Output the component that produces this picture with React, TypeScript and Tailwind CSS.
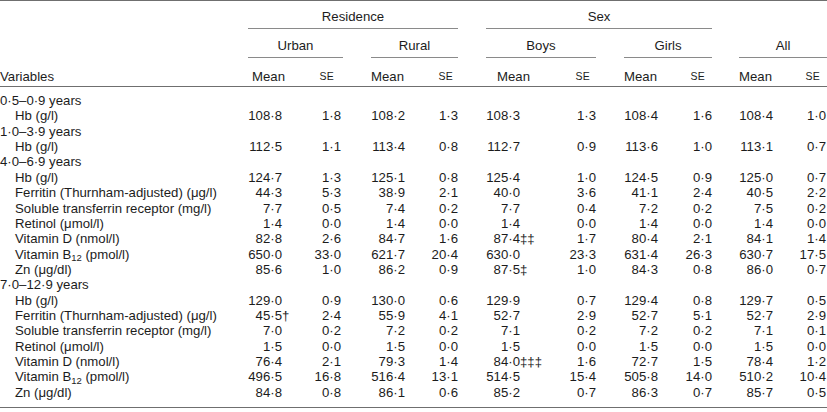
import clsx from "clsx";

type Cell = [string, string, string?];
type Row = { label: string; sub?: boolean; vals?: Cell[] };

const cols =
  "grid grid-cols-[248px_42px_53px_28px_39px_48px_28px_54px_56px_28px_41px_47px_27px_41px_47px]";

// padding per group (urban, rural, boys, girls, all)
const meanPad = ["pr-[8px]", "pr-[5px]", "pr-[20px]", "pr-[7px]", "pr-[7px]"];
const sePad = ["pr-[2px]", "pr-0", "pr-0", "pr-0", "pr-[1px]"];
const seW = ["w-[53px]", "w-[48px]", "w-[56px]", "w-[47px]", "w-[47px]"];
const meanHead = ["pl-[4px]", "pl-0", "pl-[11px]", "pl-0", "pl-0"];
const seHead = ["pr-[9px]", "pr-[5px]", "pr-[6px]", "pr-[7px]", "pr-[7px]"];

const B12 = "Vitamin B12 (pmol/l)";

const rows: Row[] = [
  { label: "0·5–0·9 years" },
  { label: "Hb (g/l)", sub: true, vals: [["108·8", "1·8"], ["108·2", "1·3"], ["108·3", "1·3"], ["108·4", "1·6"], ["108·4", "1·0"]] },
  { label: "1·0–3·9 years" },
  { label: "Hb (g/l)", sub: true, vals: [["112·5", "1·1"], ["113·4", "0·8"], ["112·7", "0·9"], ["113·6", "1·0"], ["113·1", "0·7"]] },
  { label: "4·0–6·9 years" },
  { label: "Hb (g/l)", sub: true, vals: [["124·7", "1·3"], ["125·1", "0·8"], ["125·4", "1·0"], ["124·5", "0·9"], ["125·0", "0·7"]] },
  { label: "Ferritin (Thurnham-adjusted) (μg/l)", sub: true, vals: [["44·3", "5·3"], ["38·9", "2·1"], ["40·0", "3·6"], ["41·1", "2·4"], ["40·5", "2·2"]] },
  { label: "Soluble transferrin receptor (mg/l)", sub: true, vals: [["7·7", "0·5"], ["7·4", "0·2"], ["7·7", "0·4"], ["7·2", "0·2"], ["7·5", "0·2"]] },
  { label: "Retinol (μmol/l)", sub: true, vals: [["1·4", "0·0"], ["1·4", "0·0"], ["1·4", "0·0"], ["1·4", "0·0"], ["1·4", "0·0"]] },
  { label: "Vitamin D (nmol/l)", sub: true, vals: [["82·8", "2·6"], ["84·7", "1·6"], ["87·4", "1·7", "‡‡"], ["80·4", "2·1"], ["84·1", "1·4"]] },
  { label: B12, sub: true, vals: [["650·0", "33·0"], ["621·7", "20·4"], ["630·0", "23·3"], ["631·4", "26·3"], ["630·7", "17·5"]] },
  { label: "Zn (μg/dl)", sub: true, vals: [["85·6", "1·0"], ["86·2", "0·9"], ["87·5", "1·0", "‡"], ["84·3", "0·8"], ["86·0", "0·7"]] },
  { label: "7·0–12·9 years" },
  { label: "Hb (g/l)", sub: true, vals: [["129·0", "0·9"], ["130·0", "0·6"], ["129·9", "0·7"], ["129·4", "0·8"], ["129·7", "0·5"]] },
  { label: "Ferritin (Thurnham-adjusted) (μg/l)", sub: true, vals: [["45·5", "2·4", "†"], ["55·9", "4·1"], ["52·7", "2·9"], ["52·7", "5·1"], ["52·7", "2·9"]] },
  { label: "Soluble transferrin receptor (mg/l)", sub: true, vals: [["7·0", "0·2"], ["7·2", "0·2"], ["7·1", "0·2"], ["7·2", "0·2"], ["7·1", "0·1"]] },
  { label: "Retinol (μmol/l)", sub: true, vals: [["1·5", "0·0"], ["1·5", "0·0"], ["1·5", "0·0"], ["1·5", "0·0"], ["1·5", "0·0"]] },
  { label: "Vitamin D (nmol/l)", sub: true, vals: [["76·4", "2·1"], ["79·3", "1·4"], ["84·0", "1·6", "‡‡‡"], ["72·7", "1·5"], ["78·4", "1·2"]] },
  { label: B12, sub: true, vals: [["496·5", "16·8"], ["516·4", "13·1"], ["514·5", "15·4"], ["505·8", "14·0"], ["510·2", "10·4"]] },
  { label: "Zn (μg/dl)", sub: true, vals: [["84·8", "0·8"], ["86·1", "0·6"], ["85·2", "0·7"], ["86·3", "0·7"], ["85·7", "0·5"]] },
];

function Label({ text }: { text: string }) {
  if (text === B12) {
    return (
      <>
        Vitamin B<sub className="text-[9.5px]">12</sub> (pmol/l)
      </>
    );
  }
  return <>{text}</>;
}

const groups = ["Urban", "Rural", "Boys", "Girls", "All"];

function Spacer({ i }: { i: number }) {
  if (i >= 4) return null;
  return <div className={clsx("shrink-0", i === 3 ? "w-[27px]" : "w-[28px]")} />;
}

export default function App() {
  return (
    <div className="w-[827px] h-[412px] bg-white text-[#1c1c1c] text-[13.2px] leading-[15px] font-['Liberation_Sans',Arial,sans-serif] overflow-hidden">
      <div className="border-t-[1.5px] border-[#6f6f6f]">
        {/* row 1: Residence / Sex */}
        <div className={cols}>
          <div />
          <div className="col-span-5 pt-[8px] pb-[4px] text-center border-b border-[#8a8a8a]">Residence</div>
          <div />
          <div className="col-span-5 pt-[8px] pb-[4px] text-center border-b border-[#8a8a8a]">Sex</div>
          <div className="col-span-3" />
        </div>
        {/* row 2: group names */}
        <div className={cols}>
          <div />
          {groups.map((g, i) => (
            <div key={g} className={clsx("flex", i < 4 ? "col-span-3" : "col-span-2")}>
              <div className="w-full pt-[9px] pb-[4px] text-center border-b border-[#8a8a8a]">{g}</div>
              <Spacer i={i} />
            </div>
          ))}
        </div>
        {/* row 3: Mean / SE */}
        <div className={clsx(cols, "pt-[11px] pb-[2px] border-b-[1.5px] border-[#6f6f6f]")}>
          <div>Variables</div>
          {groups.map((g, i) => (
            <div key={g} className={clsx("flex", i < 4 ? "col-span-3" : "col-span-2")}>
              <div className={clsx("grow", meanHead[i])}>Mean</div>
              <div className={clsx("text-[10.5px] tracking-[0.3px]", seHead[i])}>SE</div>
              <Spacer i={i} />
            </div>
          ))}
        </div>
        {/* body */}
        <div className="pt-[6px] pb-[7px] border-b-[1.5px] border-[#6f6f6f]">
          {rows.map((r, ri) => (
            <div key={ri} className={clsx(cols, "h-[15.37px] leading-[15.37px] whitespace-nowrap")}>
              <div className={clsx(r.sub && "pl-[15px]", !r.vals && "col-span-15")}>
                <Label text={r.label} />
              </div>
              {r.vals?.map((v, i) => (
                <div key={i} className={clsx("flex", i < 4 ? "col-span-3" : "col-span-2")}>
                  <div className={clsx("w-full text-right", meanPad[i])}>
                    {v[0]}
                    {v[2] && <span className="inline-block w-0 text-left">{v[2]}</span>}
                  </div>
                  <div className={clsx("text-right shrink-0", sePad[i], seW[i])}>{v[1]}</div>
                  <Spacer i={i} />
                </div>
              ))}
            </div>
          ))}
        </div>
      </div>
    </div>
  );
}
